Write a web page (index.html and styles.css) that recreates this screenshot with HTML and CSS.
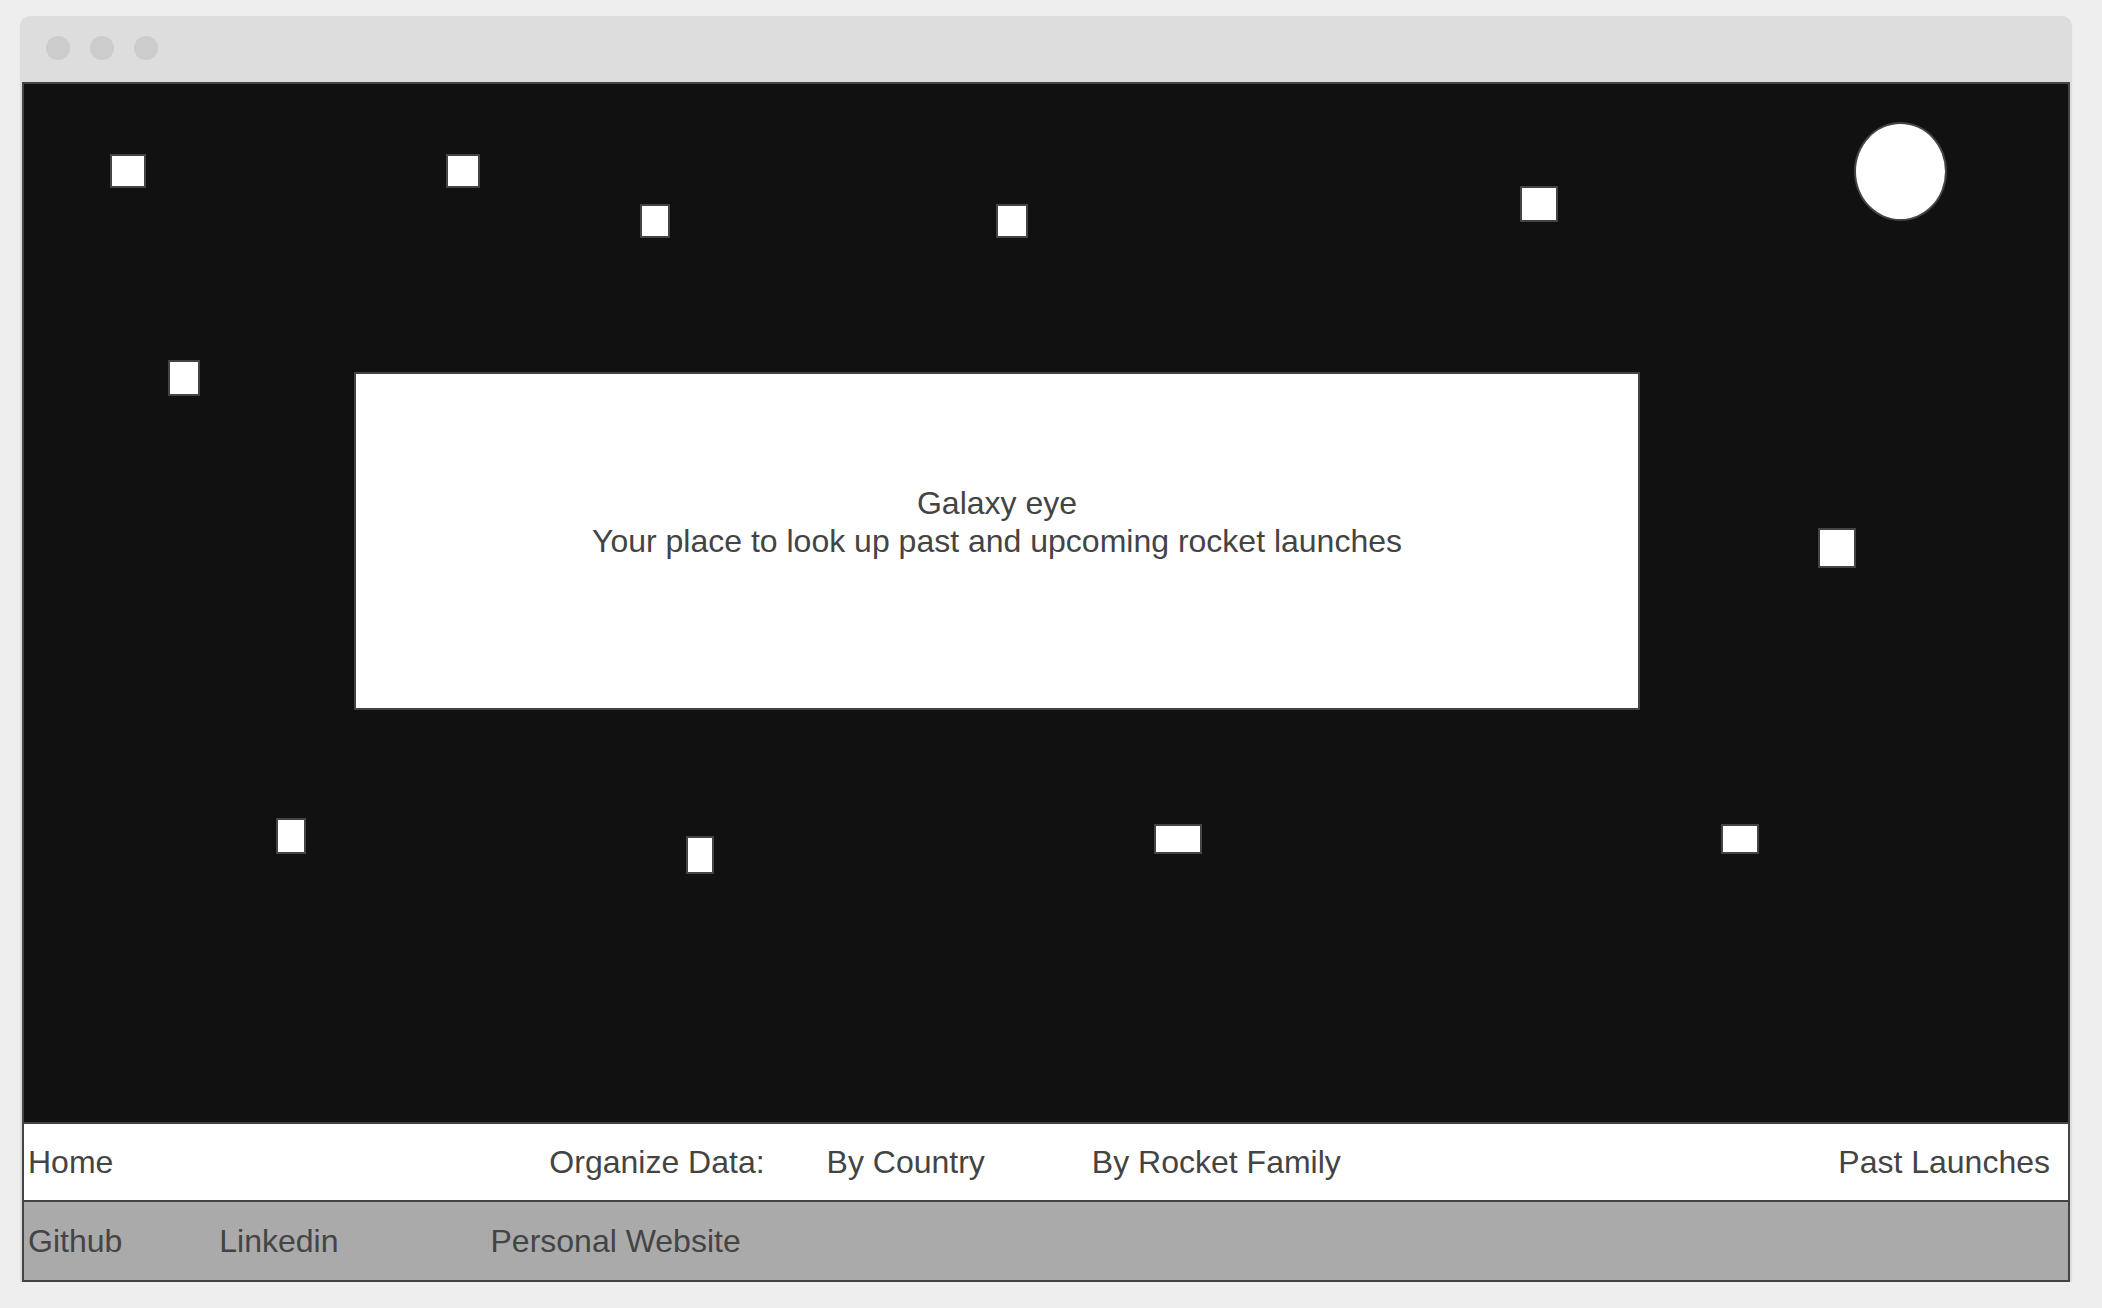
FILE: index.html
```html
<!DOCTYPE html>
<html lang="en">
<head>
<meta charset="utf-8">
<title>Galaxy eye</title>
<link rel="stylesheet" href="styles.css">
</head>
<body>
<div class="window">
  <div class="titlebar">
    <span class="dot"></span>
    <span class="dot"></span>
    <span class="dot"></span>
  </div>
  <div class="app">
    <section class="hero">
      <span class="star" style="left:86px;top:70px;width:36px;height:34px"></span>
      <span class="star" style="left:422px;top:70px;width:34px;height:34px"></span>
      <span class="star" style="left:616px;top:120px;width:30px;height:34px"></span>
      <span class="star" style="left:972px;top:120px;width:32px;height:34px"></span>
      <span class="star" style="left:1496px;top:102px;width:38px;height:36px"></span>
      <span class="moon" style="left:1830px;top:38px;width:93px;height:99px"></span>
      <span class="star" style="left:144px;top:276px;width:32px;height:36px"></span>
      <span class="star" style="left:1794px;top:444px;width:38px;height:40px"></span>
      <span class="star" style="left:252px;top:734px;width:30px;height:36px"></span>
      <span class="star" style="left:662px;top:752px;width:28px;height:38px"></span>
      <span class="star" style="left:1130px;top:740px;width:48px;height:30px"></span>
      <span class="star" style="left:1697px;top:740px;width:38px;height:30px"></span>
      <div class="intro">
        <div>Galaxy eye</div>
        <div>Your place to look up past and upcoming rocket launches</div>
      </div>
    </section>
    <nav class="nav">
      <a class="nav-home">Home</a>
      <span class="nav-org">Organize Data:</span>
      <a class="nav-country">By Country</a>
      <a class="nav-family">By Rocket Family</a>
      <a class="nav-past">Past Launches</a>
    </nav>
    <footer class="footer">
      <a class="ft-github">Github</a>
      <a class="ft-linkedin">Linkedin</a>
      <a class="ft-site">Personal Website</a>
    </footer>
  </div>
</div>
</body>
</html>
```

FILE: styles.css
```css
html, body {
  margin: 0;
  padding: 0;
  background: #eeeeee;
}
body {
  padding: 16px 30px 0 20px;
  font-family: "Liberation Sans", Arial, sans-serif;
  color: #444444;
}
.window {
  background: #dddddd;
  border-radius: 10px 10px 0 0;
  padding: 0 2px;
  box-shadow: 0 1px 3px rgba(0, 0, 0, 0.04);
}
.titlebar {
  height: 66px;
  box-sizing: border-box;
  padding: 20px 0 0 24px;
  display: flex;
  align-items: flex-start;
  gap: 20px;
}
.dot {
  width: 24px;
  height: 24px;
  border-radius: 50%;
  background: #cccccc;
}
.app {
  border: 2px solid #444444;
}
.hero {
  position: relative;
  height: 1038px;
  box-sizing: border-box;
  background: #111111;
  padding: 288px 0 0 330px;
}
.star, .moon {
  position: absolute;
  box-sizing: border-box;
  background: #ffffff;
  border: 2px solid #444444;
}
.moon {
  border-radius: 50%;
}
.intro {
  width: 1286px;
  height: 338px;
  box-sizing: border-box;
  background: #ffffff;
  border: 2px solid #444444;
  padding-top: 110px;
  text-align: center;
  font-size: 32px;
  line-height: 38px;
}
.nav {
  height: 76px;
  border-top: 2px solid #444444;
  background: #ffffff;
  display: flex;
  align-items: center;
  font-size: 32px;
  padding: 0 18px 0 4px;
}
.nav-org { margin-left: 436px; }
.nav-country { margin-left: 62px; }
.nav-family { margin-left: 107px; }
.nav-past { margin-left: auto; }
.footer {
  height: 78px;
  border-top: 2px solid #444444;
  background: #aaaaaa;
  display: flex;
  align-items: center;
  font-size: 32px;
  padding-left: 4px;
}
.ft-linkedin { margin-left: 97px; }
.ft-site { margin-left: 152px; }
```
